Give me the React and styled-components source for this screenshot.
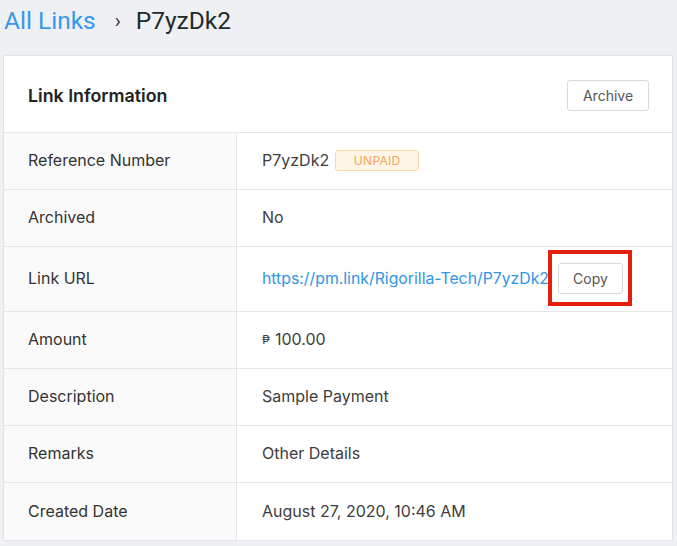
import React from "react";
import styled, { createGlobalStyle } from "styled-components";

const Global = createGlobalStyle`
  html, body { margin: 0; padding: 0; background: #eef0f4; }
  body { font-family: Inter, Roboto, "Liberation Sans", sans-serif; }
  * { box-sizing: border-box; }
`;

const Page = styled.div`
  padding: 0 4px 6px 3px;
  min-height: 546px;
  background: #eef0f4;
`;

const Breadcrumb = styled.div`
  height: 55px;
  display: flex;
  align-items: center;
  font-family: Roboto, "Liberation Sans", sans-serif;
  font-size: 24.5px;
  padding-left: 1px;
  padding-bottom: 14px;
  line-height: 28px;
`;

const Crumb = styled.span`
  color: ${(p) => (p.$active ? "#1d2b2b" : "#3399ee")};
`;

const Sep = styled.span`
  color: #333;
  font-size: 20px;
  margin: 0 15px 0 19px;
`;

const Card = styled.div`
  background: #fff;
  border: 1px solid #e2e4e8;
`;

const CardHeader = styled.div`
  height: 77px;
  display: flex;
  align-items: center;
  justify-content: space-between;
  padding: 2px 23px 0 24px;
  border-bottom: 1px solid #e6e6e6;
`;

const Title = styled.h2`
  margin: 0;
  font-size: 17.8px;
  font-weight: 600;
  color: #222;
`;

const Button = styled.button`
  font-family: Inter, Roboto, "Liberation Sans", sans-serif;
  font-size: 14px;
  color: #555;
  background: #fff;
  border: 1px solid #d9d9d9;
  border-radius: 3px;
  height: 31px;
  width: ${(p) => p.$w}px;
  padding: 0;
  cursor: pointer;
`;

const Row = styled.div`
  display: grid;
  grid-template-columns: 233px 1fr;
  height: ${(p) => p.$h || 57}px;
  border-bottom: ${(p) => (p.$last ? "none" : "1px solid #e6e6e6")};
`;

const Label = styled.div`
  background: #fafafa;
  border-right: 1px solid #e6e6e6;
  display: flex;
  align-items: center;
  padding: 0 0 2px 24px;
  font-size: 16px;
  color: #333;
`;

const Value = styled.div`
  display: flex;
  align-items: center;
  padding: 0 0 2px 25px;
  font-size: 16px;
  color: #3d3d3d;
  gap: ${(p) => p.$gap || 9}px;
`;

const Badge = styled.span`
  display: inline-flex;
  align-items: center;
  justify-content: center;
  width: 84px;
  height: 21px;
  font-size: 12px;
  color: #f5a35c;
  background: #fff6e8;
  border: 1px solid #fed9a6;
  border-radius: 3px;
  letter-spacing: 0.3px;
`;

const Link = styled.a`
  color: #2f95e8;
  font-size: 15.8px;
  text-decoration: none;
`;

const Highlight = styled.span`
  position: relative;
  display: inline-flex;
  &::after {
    content: "";
    position: absolute;
    left: -10px;
    top: -13px;
    right: -9px;
    bottom: -12px;
    border: 4px solid #e3200d;
  }
`;

const Peso = styled.span`
  font-size: 12px;
`;

const rows = [
  { label: "Reference Number", key: "ref", gap: 6 },
  { label: "Archived", value: "No" },
  { label: "Link URL", key: "url", h: 65 },
  { label: "Amount", key: "amount", gap: 5 },
  { label: "Description", value: "Sample Payment" },
  { label: "Remarks", value: "Other Details" },
  { label: "Created Date", value: "August 27, 2020, 10:46 AM", last: true },
];

function renderValue(r) {
  if (r.key === "ref")
    return (
      <>
        <span>P7yzDk2</span>
        <Badge>UNPAID</Badge>
      </>
    );
  if (r.key === "url")
    return (
      <>
        <Link href="#">https://pm.link/Rigorilla-Tech/P7yzDk2</Link>
        <Highlight>
          <Button $w={65}>Copy</Button>
        </Highlight>
      </>
    );
  if (r.key === "amount")
    return (
      <>
        <Peso>₱</Peso>
        <span>100.00</span>
      </>
    );
  return r.value;
}

export default function App() {
  return (
    <Page>
      <Global />
      <Breadcrumb>
        <Crumb>All Links</Crumb>
        <Sep>›</Sep>
        <Crumb $active>P7yzDk2</Crumb>
      </Breadcrumb>
      <Card>
        <CardHeader>
          <Title>Link Information</Title>
          <Button $w={82}>Archive</Button>
        </CardHeader>
        {rows.map((r) => (
          <Row key={r.label} $h={r.h} $last={r.last}>
            <Label>{r.label}</Label>
            <Value $gap={r.gap}>{renderValue(r)}</Value>
          </Row>
        ))}
      </Card>
    </Page>
  );
}
